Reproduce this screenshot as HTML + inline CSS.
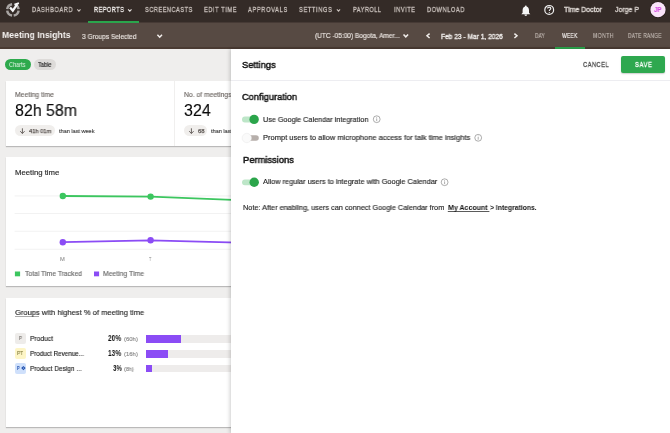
<!DOCTYPE html>
<html><head><meta charset="utf-8">
<style>
*{box-sizing:border-box;margin:0;padding:0}
html,body{width:670px;height:433px;overflow:hidden;background:#efeeed;font-family:"Liberation Sans",sans-serif}
.a{position:absolute}
.t{position:absolute;white-space:nowrap;transform-origin:0 0;will-change:transform;font-family:"Liberation Sans",sans-serif}
</style></head><body>
<!-- header -->
<div class="a" style="left:0;top:0;width:670px;height:23px;background:linear-gradient(#342b27 0,#342b27 22px,#463a35 22px,#463a35 23px)"></div>
<div class="a" style="left:88px;top:21px;width:51px;height:2px;background:#2aa54c"></div>
<svg class="a" style="left:0;top:0" width="670" height="23" viewBox="0 0 670 23">
  <!-- logo -->
  <g fill="none" stroke="#a9a5a3" stroke-width="2.5"><path d="M 7.21 9.10 A 5.75 5.75 0 0 1 12.10 4.21"/><path d="M 12.10 15.59 A 5.75 5.75 0 0 1 7.21 10.70"/><path d="M 18.59 10.70 A 5.75 5.75 0 0 1 13.70 15.59"/><path d="M 15.78 4.92 A 5.75 5.75 0 0 1 18.59 9.10"/></g>
  <path d="M 10.0 7.4 L 12.8 10.6 L 17.3 4.2" fill="none" stroke="#f6f6f6" stroke-width="2.3" stroke-linejoin="miter"/>
  <path d="M 14.4 4.6 L 18.9 3.2" fill="none" stroke="#f6f6f6" stroke-width="1.9"/>
  <!-- nav chevrons -->
  <g fill="none" stroke="#c9c1bc" stroke-width="1.1">
    <path d="M77.3 9.4 L78.9 11.1 L80.5 9.4"/>
    <path d="M336.9 9.4 L338.5 11.1 L340.1 9.4"/>
  </g>
  <path d="M128.1 9.4 L129.8 11.1 L131.5 9.4" fill="none" stroke="#e6e2df" stroke-width="1.1"/>
  <!-- bell -->
  <path d="M521.3 14.3 L522.6 12.8 L522.6 10.3 C522.6 8.1 523.8 6.7 525.8 6.6 C527.8 6.7 529 8.1 529 10.3 L529 12.8 L530.3 14.3 Z" fill="#f6f6f6"/>
  <circle cx="525.8" cy="6.3" r="0.9" fill="#f6f6f6"/>
  <path d="M524.4 14.6 A1.4 1.4 0 0 0 527.2 14.6 Z" fill="#f6f6f6"/>
  <!-- help -->
  <circle cx="549.2" cy="9.9" r="4.4" fill="none" stroke="#f0f0f0" stroke-width="1.2"/>
  <path d="M547.6 8.6 C547.6 7.6 548.3 7.1 549.2 7.1 C550.1 7.1 550.8 7.7 550.8 8.5 C550.8 9.6 549.3 9.7 549.3 11" fill="none" stroke="#f0f0f0" stroke-width="1.1"/>
  <circle cx="549.3" cy="12.5" r="0.6" fill="#f0f0f0"/>
  <!-- avatar -->
  <circle cx="658" cy="9.7" r="8.3" fill="#221915"/><circle cx="658" cy="9.7" r="7.6" fill="#f9e3f9"/>
</svg>
<!-- subheader -->
<div class="a" style="left:0;top:23px;width:670px;height:24px;background:#574a43"></div>
<div class="a" style="left:0;top:47px;width:670px;height:1.5px;background:#4a3b33"></div>
<div class="a" style="left:555px;top:47px;width:30px;height:1.5px;background:#2aa54c"></div>
<svg class="a" style="left:0;top:23px" width="670" height="25" viewBox="0 23 670 25">
  <g fill="none" stroke="#f2eeeb" stroke-width="1.5">
    <path d="M157.4 34.8 L159.7 37.2 L162 34.8"/>
    <path d="M403.5 34.4 L405.8 36.8 L408.1 34.4"/>
    <path d="M429.6 33.6 L427 35.8 L429.6 38"/>
    <path d="M514.4 33.6 L517 35.8 L514.4 38"/>
  </g>
</svg>
<!-- chips -->
<div class="a" style="left:5.4px;top:59px;width:25.4px;height:11.2px;border-radius:6px;background:#2eaa4d"></div>
<div class="a" style="left:34.2px;top:59px;width:21.5px;height:11.2px;border-radius:6px;background:#dddbd9"></div>
<!-- card1 -->
<div class="a" style="left:6px;top:81px;width:700px;height:65px;background:#fff;box-shadow:0 1px 1px rgba(0,0,0,.22)"></div>
<div class="a" style="left:174px;top:81px;width:1px;height:65px;background:#f0efee"></div>
<div class="a" style="left:15px;top:125.4px;width:40.3px;height:10.8px;border-radius:6px;background:#f0eeec"></div>
<div class="a" style="left:184px;top:125.4px;width:22.8px;height:10.8px;border-radius:6px;background:#f0eeec"></div>
<svg class="a" style="left:0;top:120px" width="230" height="20" viewBox="0 120 230 20">
  <g fill="none" stroke="#5a5451" stroke-width="0.9">
    <path d="M22.4 128.3 L22.4 133.4 M20.2 131.2 L22.4 133.5 L24.6 131.2"/>
    <path d="M191.4 128.3 L191.4 133.4 M189.2 131.2 L191.4 133.5 L193.6 131.2"/>
  </g>
</svg>
<!-- card2 -->
<div class="a" style="left:6px;top:157px;width:700px;height:129px;background:#fff;box-shadow:0 1px 1px rgba(0,0,0,.22)"></div>
<svg class="a" style="left:0;top:150px" width="670" height="140" viewBox="0 150 670 140">
  <g stroke="#efefef" stroke-width="0.8">
    <line x1="14.6" y1="195.9" x2="670" y2="195.9"/>
    <line x1="14.6" y1="213.5" x2="670" y2="213.5"/>
    <line x1="14.6" y1="231.3" x2="670" y2="231.3"/>
    <line x1="14.6" y1="249.3" x2="670" y2="249.3"/>
  </g>
  <polyline points="62.8,196 150.6,196.6 238.5,200.1 326,200" fill="none" stroke="#3cc65f" stroke-width="1.8"/>
  <polyline points="62.8,242.2 150.6,240.3 238.5,242.6 326,242" fill="none" stroke="#8b4cf5" stroke-width="1.8"/>
  <circle cx="62.8" cy="196" r="3.2" fill="#3cc65f"/>
  <circle cx="150.6" cy="196.6" r="3.2" fill="#3cc65f"/>
  <circle cx="62.8" cy="242.2" r="3.2" fill="#8b4cf5"/>
  <circle cx="150.6" cy="240.3" r="3.2" fill="#8b4cf5"/>
  <rect x="14.9" y="271.5" width="5.2" height="4.8" fill="#3cc65f"/>
  <rect x="94" y="271.5" width="5.1" height="4.8" fill="#8b4cf5"/>
</svg>
<!-- card3 -->
<div class="a" style="left:6px;top:298px;width:700px;height:129px;background:#fff;box-shadow:0 1px 1px rgba(0,0,0,.22)"></div>
<div class="a" style="left:14.9px;top:316.4px;width:24.5px;height:0.9px;background:#a8a8a8"></div>
<div class="a" style="left:15px;top:333px;width:10.7px;height:10.7px;border-radius:2px;background:#eeecea"></div>
<div class="a" style="left:15px;top:347.9px;width:10.7px;height:10.8px;border-radius:2px;background:#fdf5c6"></div>
<div class="a" style="left:15px;top:362.8px;width:10.7px;height:10.8px;border-radius:2px;background:#cfe0fb"></div>
<svg class="a" style="left:0;top:330px" width="30" height="50" viewBox="0 330 30 50">
  <path d="M23.4 365.9 L25.6 368.1 L23.4 370.3 L21.2 368.1 Z" fill="#1e4fae"/><path d="M23.4 367.4 L24.1 368.1 L23.4 368.8 L22.7 368.1 Z" fill="#cfe0fb"/>
</svg>
<div class="a" style="left:145.5px;top:335px;width:600px;height:7.5px;background:#eeeceb"></div>
<div class="a" style="left:145.5px;top:350px;width:600px;height:7.5px;background:#eeeceb"></div>
<div class="a" style="left:145.5px;top:364.8px;width:600px;height:7.4px;background:#eeeceb"></div>
<div class="a" style="left:145.5px;top:335px;width:35.2px;height:7.5px;background:#8b4cf5"></div>
<div class="a" style="left:145.5px;top:350px;width:22.9px;height:7.5px;background:#8b4cf5"></div>
<div class="a" style="left:145.5px;top:364.8px;width:6.5px;height:7.4px;background:#8b4cf5"></div>
<!-- drawer -->
<div class="a" style="z-index:10;left:231px;top:48.5px;width:439px;height:385px;background:#fff;box-shadow:-1px 0 4px rgba(0,0,0,.2)"></div>
<div class="a" style="z-index:11;left:231px;top:80px;width:439px;height:1px;background:#ededf1"></div>
<div class="a" style="z-index:11;left:620.7px;top:56.2px;width:44.5px;height:16.4px;border-radius:2px;background:#2ea84f;box-shadow:0 1px 1.5px rgba(0,0,0,.2)"></div>
<svg class="a" style="z-index:11;left:231px;top:48px" width="439" height="385" viewBox="231 48 439 385">
  <!-- toggle on 1 -->
  <rect x="242" y="116.6" width="16.5" height="5.8" rx="2.9" fill="#bde6c8"/>
  <circle cx="254.1" cy="119.4" r="4.7" fill="#2ba54b"/>
  <!-- toggle off -->
  <rect x="243" y="135.2" width="15.8" height="5.6" rx="2.8" fill="#b6afab"/>
  <circle cx="246.8" cy="138" r="4.7" fill="#fafafa" stroke="#e2e2e2" stroke-width="0.4"/>
  <!-- toggle on 3 -->
  <rect x="242" y="179.4" width="16.5" height="5.8" rx="2.9" fill="#bde6c8"/>
  <circle cx="254.2" cy="182.2" r="4.7" fill="#2ba54b"/>
  <!-- info icons -->
  <g fill="none" stroke="#8a8a8a" stroke-width="0.7">
    <circle cx="376.7" cy="119.2" r="3.4"/>
    <circle cx="478.2" cy="137.8" r="3.4"/>
    <circle cx="444.6" cy="182.2" r="3.4"/>
    <path d="M376.7 118.4 V121.1 M478.2 137 V139.7 M444.6 181.4 V184.1"/>
  </g>
  <g fill="#8a8a8a">
    <circle cx="376.7" cy="117.3" r="0.45"/>
    <circle cx="478.2" cy="135.9" r="0.45"/>
    <circle cx="444.6" cy="180.3" r="0.45"/>
  </g>
  <rect x="447.8" y="211" width="41.6" height="0.8" fill="#333"/>
</svg>
<div class="t" style="left:31.80px;top:6.38px;font-weight:400;font-size:7.25px;line-height:7.25px;letter-spacing:0.772px;transform:scaleX(0.7800);color:#c9c1bc;-webkit-text-stroke:0.3px #c9c1bc;">DASHBOARD</div>
<div class="t" style="left:93.60px;top:6.38px;font-weight:400;font-size:7.25px;line-height:7.25px;letter-spacing:0.556px;transform:scaleX(0.7800);color:#f4f1ef;-webkit-text-stroke:0.3px #f4f1ef;">REPORTS</div>
<div class="t" style="left:144.50px;top:6.38px;font-weight:400;font-size:7.25px;line-height:7.25px;letter-spacing:0.628px;transform:scaleX(0.7800);color:#c9c1bc;-webkit-text-stroke:0.3px #c9c1bc;">SCREENCASTS</div>
<div class="t" style="left:204.00px;top:6.38px;font-weight:400;font-size:7.25px;line-height:7.25px;letter-spacing:0.740px;transform:scaleX(0.7800);color:#c9c1bc;-webkit-text-stroke:0.3px #c9c1bc;">EDIT TIME</div>
<div class="t" style="left:248.40px;top:6.38px;font-weight:400;font-size:7.25px;line-height:7.25px;letter-spacing:0.862px;transform:scaleX(0.7800);color:#c9c1bc;-webkit-text-stroke:0.3px #c9c1bc;">APPROVALS</div>
<div class="t" style="left:299.40px;top:6.38px;font-weight:400;font-size:7.25px;line-height:7.25px;letter-spacing:0.828px;transform:scaleX(0.7800);color:#c9c1bc;-webkit-text-stroke:0.3px #c9c1bc;">SETTINGS</div>
<div class="t" style="left:353.20px;top:6.38px;font-weight:400;font-size:7.25px;line-height:7.25px;letter-spacing:0.568px;transform:scaleX(0.7800);color:#c9c1bc;-webkit-text-stroke:0.3px #c9c1bc;">PAYROLL</div>
<div class="t" style="left:393.80px;top:6.38px;font-weight:400;font-size:7.25px;line-height:7.25px;letter-spacing:0.713px;transform:scaleX(0.7800);color:#c9c1bc;-webkit-text-stroke:0.3px #c9c1bc;">INVITE</div>
<div class="t" style="left:427.00px;top:6.38px;font-weight:400;font-size:7.25px;line-height:7.25px;letter-spacing:0.744px;transform:scaleX(0.7800);color:#c9c1bc;-webkit-text-stroke:0.3px #c9c1bc;">DOWNLOAD</div>
<div class="t" style="left:564.40px;top:6.07px;font-weight:400;font-size:7.25px;line-height:7.25px;letter-spacing:0.000px;transform:scaleX(0.9675);color:#e3ddd9;-webkit-text-stroke:0.3px #e3ddd9;">Time Doctor</div>
<div class="t" style="left:615.00px;top:6.07px;font-weight:400;font-size:7.25px;line-height:7.25px;letter-spacing:0.000px;transform:scaleX(0.9600);color:#ddd6d2;-webkit-text-stroke:0.3px #ddd6d2;">Jorge P</div>
<div class="t" style="left:653.90px;top:6.69px;font-weight:700;font-size:6.96px;line-height:6.96px;letter-spacing:0.000px;transform:scaleX(0.9000);color:#d23fe0;">JP</div>
<div class="t" style="left:2.10px;top:30.43px;font-weight:700;font-size:9.71px;line-height:9.71px;letter-spacing:0.000px;transform:scaleX(0.8948);color:#f6f3f1;">Meeting Insights</div>
<div class="t" style="left:82.40px;top:33.54px;font-weight:400;font-size:7.10px;line-height:7.10px;letter-spacing:0.000px;transform:scaleX(0.9271);color:#ebe5e1;-webkit-text-stroke:0.15px #ebe5e1;">3 Groups Selected</div>
<div class="t" style="left:314.60px;top:33.16px;font-weight:400;font-size:7.10px;line-height:7.10px;letter-spacing:0.000px;transform:scaleX(0.9228);color:#ebe5e1;-webkit-text-stroke:0.15px #ebe5e1;">(UTC -05:00) Bogota, Amer...</div>
<div class="t" style="left:441.00px;top:33.62px;font-weight:400;font-size:6.96px;line-height:6.96px;letter-spacing:0.000px;transform:scaleX(0.9523);color:#f6f3f1;-webkit-text-stroke:0.3px #f6f3f1;">Feb 23 - Mar 1, 2026</div>
<div class="t" style="left:534.70px;top:32.98px;font-weight:400;font-size:6.38px;line-height:6.38px;letter-spacing:-0.026px;transform:scaleX(0.7800);color:#c2b9b3;-webkit-text-stroke:0.15px #c2b9b3;">DAY</div>
<div class="t" style="left:562.20px;top:32.98px;font-weight:400;font-size:6.38px;line-height:6.38px;letter-spacing:0.291px;transform:scaleX(0.7800);color:#f6f3f1;-webkit-text-stroke:0.15px #f6f3f1;">WEEK</div>
<div class="t" style="left:592.50px;top:32.98px;font-weight:400;font-size:6.38px;line-height:6.38px;letter-spacing:0.692px;transform:scaleX(0.7800);color:#c2b9b3;-webkit-text-stroke:0.15px #c2b9b3;">MONTH</div>
<div class="t" style="left:627.90px;top:32.98px;font-weight:400;font-size:6.38px;line-height:6.38px;letter-spacing:0.231px;transform:scaleX(0.7800);color:#c2b9b3;-webkit-text-stroke:0.15px #c2b9b3;">DATE RANGE</div>
<div class="t" style="left:9.20px;top:62.37px;font-weight:400;font-size:6.52px;line-height:6.52px;letter-spacing:0.000px;transform:scaleX(0.8550);color:#e6f4e9;-webkit-text-stroke:0.0px #e6f4e9;">Charts</div>
<div class="t" style="left:38.30px;top:62.37px;font-weight:400;font-size:6.52px;line-height:6.52px;letter-spacing:0.000px;transform:scaleX(0.8563);color:#262626;-webkit-text-stroke:0.15px #262626;">Table</div>
<div class="t" style="left:15.00px;top:91.69px;font-weight:400;font-size:6.96px;line-height:6.96px;letter-spacing:0.000px;transform:scaleX(0.9750);color:#6e6864;-webkit-text-stroke:0.15px #6e6864;">Meeting time</div>
<div class="t" style="left:15.40px;top:102.14px;font-weight:400;font-size:16.09px;line-height:16.09px;letter-spacing:0.000px;transform:scaleX(0.9903);color:#080808;-webkit-text-stroke:0.1px #080808;">82h 58m</div>
<div class="t" style="left:28.67px;top:129.37px;font-weight:400;font-size:5.94px;line-height:5.94px;letter-spacing:0.000px;transform:scaleX(0.9680);color:#5a5451;-webkit-text-stroke:0.25px #5a5451;">41h 01m</div>
<div class="t" style="left:59.00px;top:127.91px;font-weight:400;font-size:6.23px;line-height:6.23px;letter-spacing:0.000px;transform:scaleX(0.8900);color:#3a3a3a;-webkit-text-stroke:0.15px #3a3a3a;">than last week</div>
<div class="t" style="left:183.70px;top:91.69px;font-weight:400;font-size:6.96px;line-height:6.96px;letter-spacing:0.000px;transform:scaleX(0.9755);color:#6e6864;-webkit-text-stroke:0.15px #6e6864;">No. of meetings</div>
<div class="t" style="left:183.70px;top:102.14px;font-weight:400;font-size:16.09px;line-height:16.09px;letter-spacing:0.000px;transform:scaleX(0.9926);color:#080808;-webkit-text-stroke:0.1px #080808;">324</div>
<div class="t" style="left:197.50px;top:129.37px;font-weight:400;font-size:5.94px;line-height:5.94px;letter-spacing:0.000px;transform:scaleX(1.0000);color:#5a5451;-webkit-text-stroke:0.25px #5a5451;">68</div>
<div class="t" style="left:211.00px;top:127.91px;font-weight:400;font-size:6.23px;line-height:6.23px;letter-spacing:0.000px;transform:scaleX(0.8900);color:#3a3a3a;-webkit-text-stroke:0.15px #3a3a3a;">than last week</div>
<div class="t" style="left:14.90px;top:168.54px;font-weight:400;font-size:7.54px;line-height:7.54px;letter-spacing:0.000px;transform:scaleX(1.0279);color:#2a2a2a;-webkit-text-stroke:0.15px #2a2a2a;">Meeting time</div>
<div class="t" style="left:60.40px;top:257.04px;font-weight:400;font-size:5.22px;line-height:5.22px;letter-spacing:0.000px;transform:scaleX(1.1000);color:#9a9a9a;-webkit-text-stroke:0.15px #9a9a9a;">M</div>
<div class="t" style="left:149.20px;top:257.04px;font-weight:400;font-size:5.22px;line-height:5.22px;letter-spacing:0.000px;transform:scaleX(0.7500);color:#9a9a9a;-webkit-text-stroke:0.15px #9a9a9a;">T</div>
<div class="t" style="left:24.60px;top:271.08px;font-weight:400;font-size:7.10px;line-height:7.10px;letter-spacing:0.000px;transform:scaleX(0.9583);color:#6a6a6a;-webkit-text-stroke:0.15px #6a6a6a;">Total Time Tracked</div>
<div class="t" style="left:102.90px;top:271.08px;font-weight:400;font-size:7.10px;line-height:7.10px;letter-spacing:0.000px;transform:scaleX(0.9628);color:#6a6a6a;-webkit-text-stroke:0.15px #6a6a6a;">Meeting Time</div>
<div class="t" style="left:14.90px;top:308.79px;font-weight:400;font-size:8.12px;line-height:8.12px;letter-spacing:0.000px;transform:scaleX(0.9309);color:#262626;-webkit-text-stroke:0.15px #262626;">Groups with highest % of meeting time</div>
<div class="t" style="left:29.90px;top:334.84px;font-weight:400;font-size:7.25px;line-height:7.25px;letter-spacing:0.000px;transform:scaleX(0.9240);color:#262626;-webkit-text-stroke:0.15px #262626;">Product</div>
<div class="t" style="left:29.90px;top:350.85px;font-weight:400;font-size:7.10px;line-height:7.10px;letter-spacing:0.000px;transform:scaleX(0.8902);color:#262626;-webkit-text-stroke:0.15px #262626;">Product Revenue...</div>
<div class="t" style="left:29.90px;top:365.54px;font-weight:400;font-size:7.10px;line-height:7.10px;letter-spacing:0.000px;transform:scaleX(0.9179);color:#262626;-webkit-text-stroke:0.15px #262626;">Product Design ...</div>
<div class="t" style="left:108.40px;top:335.11px;font-weight:700;font-size:8.26px;line-height:8.26px;letter-spacing:0.000px;transform:scaleX(0.7941);color:#141414;">20%</div>
<div class="t" style="left:108.40px;top:350.42px;font-weight:700;font-size:8.26px;line-height:8.26px;letter-spacing:0.000px;transform:scaleX(0.7941);color:#141414;">13%</div>
<div class="t" style="left:112.90px;top:365.19px;font-weight:700;font-size:8.26px;line-height:8.26px;letter-spacing:0.000px;transform:scaleX(0.7500);color:#141414;">3%</div>
<div class="t" style="left:123.90px;top:337.14px;font-weight:400;font-size:5.94px;line-height:5.94px;letter-spacing:0.000px;transform:scaleX(0.9929);color:#8a8a8a;-webkit-text-stroke:0.15px #8a8a8a;">(60h)</div>
<div class="t" style="left:123.90px;top:352.14px;font-weight:400;font-size:5.94px;line-height:5.94px;letter-spacing:0.000px;transform:scaleX(0.9929);color:#8a8a8a;-webkit-text-stroke:0.15px #8a8a8a;">(16h)</div>
<div class="t" style="left:123.90px;top:366.52px;font-weight:400;font-size:5.94px;line-height:5.94px;letter-spacing:0.000px;transform:scaleX(0.9273);color:#8a8a8a;-webkit-text-stroke:0.15px #8a8a8a;">(8h)</div>
<div class="t" style="left:18.70px;top:336.44px;font-weight:400;font-size:5.51px;line-height:5.51px;letter-spacing:0.000px;transform:scaleX(0.8000);color:#77736f;-webkit-text-stroke:0.15px #77736f;">P</div>
<div class="t" style="left:17.40px;top:351.05px;font-weight:400;font-size:5.51px;line-height:5.51px;letter-spacing:0.000px;transform:scaleX(0.8571);color:#8c8548;-webkit-text-stroke:0.15px #8c8548;">PT</div>
<div class="t" style="left:16.60px;top:366.25px;font-weight:400;font-size:5.36px;line-height:5.36px;letter-spacing:0.000px;transform:scaleX(0.7500);color:#1e4fae;-webkit-text-stroke:0.15px #1e4fae;">P</div>
<div class="t" style="left:242.40px;top:59.63px;font-weight:400;font-size:9.71px;line-height:9.71px;letter-spacing:0.000px;transform:scaleX(0.9611);color:#141414;-webkit-text-stroke:0.48px #141414;z-index:12;">Settings</div>
<div class="t" style="left:583.40px;top:60.61px;font-weight:400;font-size:7.39px;line-height:7.39px;letter-spacing:0.590px;transform:scaleX(0.7800);color:#4a4a4a;-webkit-text-stroke:0.3px #4a4a4a;z-index:12;">CANCEL</div>
<div class="t" style="left:634.50px;top:60.61px;font-weight:400;font-size:7.39px;line-height:7.39px;letter-spacing:0.846px;transform:scaleX(0.7800);color:#ffffff;-webkit-text-stroke:0.3px #ffffff;z-index:12;">SAVE</div>
<div class="t" style="left:242.40px;top:92.48px;font-weight:400;font-size:9.86px;line-height:9.86px;letter-spacing:0.000px;transform:scaleX(0.9424);color:#141414;-webkit-text-stroke:0.48px #141414;z-index:12;">Configuration</div>
<div class="t" style="left:263.00px;top:115.85px;font-weight:400;font-size:7.54px;line-height:7.54px;letter-spacing:0.000px;transform:scaleX(0.9609);color:#262626;-webkit-text-stroke:0.15px #262626;z-index:12;">Use Google Calendar integration</div>
<div class="t" style="left:263.00px;top:133.69px;font-weight:400;font-size:7.54px;line-height:7.54px;letter-spacing:0.000px;transform:scaleX(0.9966);color:#262626;-webkit-text-stroke:0.15px #262626;z-index:12;">Prompt users to allow microphone access for talk time insights</div>
<div class="t" style="left:242.70px;top:155.16px;font-weight:400;font-size:9.57px;line-height:9.57px;letter-spacing:0.000px;transform:scaleX(0.9769);color:#141414;-webkit-text-stroke:0.48px #141414;z-index:12;">Permissions</div>
<div class="t" style="left:263.00px;top:178.46px;font-weight:400;font-size:7.54px;line-height:7.54px;letter-spacing:0.000px;transform:scaleX(0.9775);color:#262626;-webkit-text-stroke:0.15px #262626;z-index:12;">Allow regular users to integrate with Google Calendar</div>
<div class="t" style="left:242.60px;top:203.92px;font-weight:400;font-size:7.39px;line-height:7.39px;letter-spacing:0.000px;transform:scaleX(0.9897);color:#262626;-webkit-text-stroke:0.15px #262626;z-index:12;">Note: After enabling, users can connect Google Calendar from</div>
<div class="t" style="left:447.80px;top:203.92px;font-weight:700;font-size:7.39px;line-height:7.39px;letter-spacing:0.000px;transform:scaleX(0.9548);color:#141414;z-index:12;">My Account</div>
<div class="t" style="left:490.30px;top:203.92px;font-weight:700;font-size:7.39px;line-height:7.39px;letter-spacing:0.000px;transform:scaleX(0.9216);color:#141414;z-index:12;">&gt; Integrations.</div>
</body></html>
